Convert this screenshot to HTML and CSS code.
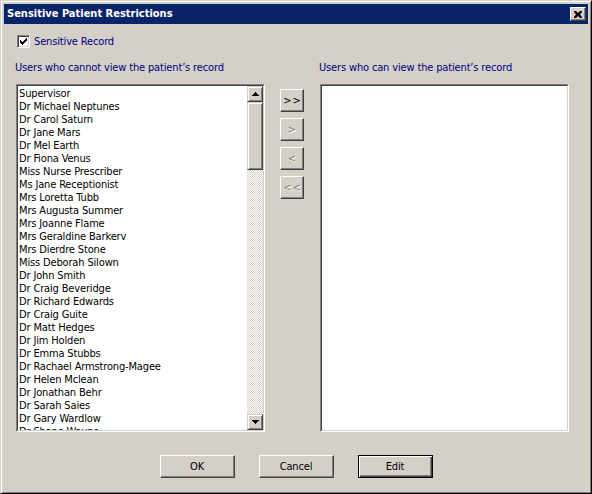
FILE: index.html
```html
<!DOCTYPE html>
<html>
<head>
<meta charset="utf-8">
<link rel="stylesheet" href="styles.css">
</head>
<body>
<div class="window">
  <div class="titlebar">
    <span class="title">Sensitive Patient Restrictions</span>
    <span class="close"><svg width="8" height="7" viewBox="0 0 8 7"><path d="M0 0h2l2 2 2-2h2v1l-2 2.5 2 2.5v1h-2l-2-2-2 2h-2v-1l2-2.5-2-2.5z" fill="#000"/></svg></span>
  </div>
  <div class="content">
    <div class="check-row">
      <span class="checkbox"><svg width="7" height="7" viewBox="0 0 7 7"><path d="M0 2h1v1h1v1h1v-1h1v-1h1v-1h1v-1h1v3h-1v1h-1v1h-1v1h-1v1h-1v-1h-1v-1h-1z" fill="#000"/></svg></span>
      <span class="check-label">Sensitive Record</span>
    </div>
    <div class="panes">
      <div class="pane">
        <div class="caption">Users who cannot view the patient’s record</div>
        <div class="listbox">
          <div class="listbox-inner">
            <div class="items">
              <div class="item">Supervisor</div>
              <div class="item">Dr Michael Neptunes</div>
              <div class="item">Dr Carol Saturn</div>
              <div class="item">Dr Jane Mars</div>
              <div class="item">Dr Mel Earth</div>
              <div class="item">Dr Fiona Venus</div>
              <div class="item">Miss Nurse Prescriber</div>
              <div class="item">Ms Jane Receptionist</div>
              <div class="item">Mrs Loretta Tubb</div>
              <div class="item">Mrs Augusta Summer</div>
              <div class="item">Mrs Joanne Flame</div>
              <div class="item">Mrs Geraldine Barkerv</div>
              <div class="item">Mrs Dierdre Stone</div>
              <div class="item">Miss Deborah Silown</div>
              <div class="item">Dr John Smith</div>
              <div class="item">Dr Craig Beveridge</div>
              <div class="item">Dr Richard Edwards</div>
              <div class="item">Dr Craig Guite</div>
              <div class="item">Dr Matt Hedges</div>
              <div class="item">Dr Jim Holden</div>
              <div class="item">Dr Emma Stubbs</div>
              <div class="item">Dr Rachael Armstrong-Magee</div>
              <div class="item">Dr Helen Mclean</div>
              <div class="item">Dr Jonathan Behr</div>
              <div class="item">Dr Sarah Saies</div>
              <div class="item">Dr Gary Wardlow</div>
              <div class="item">Dr Shane Wayne</div>
            </div>
            <div class="scrollbar">
              <span class="sb-btn"><svg width="7" height="4" viewBox="0 0 7 4"><path d="M3 0h1v1h1v1h1v1h1v1h-7v-1h1v-1h1v-1h1z" fill="#000"/></svg></span>
              <span class="sb-thumb"></span>
              <span class="sb-track"></span>
              <span class="sb-btn"><svg width="7" height="4" viewBox="0 0 7 4"><path d="M0 0h7v1h-1v1h-1v1h-1v1h-1v-1h-1v-1h-1v-1h-1z" fill="#000"/></svg></span>
            </div>
          </div>
        </div>
      </div>
      <div class="movers">
        <span class="btn mover">&gt;&gt;</span>
        <span class="btn mover disabled">&gt;</span>
        <span class="btn mover disabled">&lt;</span>
        <span class="btn mover disabled">&lt;&lt;</span>
      </div>
      <div class="pane">
        <div class="caption">Users who can view the patient’s record</div>
        <div class="listbox">
          <div class="listbox-inner"></div>
        </div>
      </div>
    </div>
    <div class="actions">
      <span class="btn action">OK</span>
      <span class="btn action">Cancel</span>
      <span class="btn action default">Edit</span>
    </div>
  </div>
</div>
</body>
</html>
```
FILE: styles.css
```css
* { box-sizing: border-box; }
html, body { margin: 0; padding: 0; }
body {
  width: 592px;
  height: 494px;
  background: #d4d0c8;
  font-family: "DejaVu Sans Condensed", "DejaVu Sans", "Liberation Sans", sans-serif;
  font-size: 11px;
  letter-spacing: -0.15px;
  color: #000;
}
.window {
  width: 592px;
  height: 494px;
  background: #d4d0c8;
  border: 1px solid;
  border-color: #d4d0c8 #000 #000 #d4d0c8;
  box-shadow: inset 1px 1px #fff, inset -1px -1px #808080;
  padding: 3px;
  display: flex;
  flex-direction: column;
}
.titlebar {
  height: 20px;
  background: #0a246a;
  display: flex;
  align-items: center;
  justify-content: space-between;
  padding: 0 2px 0 3px;
}
.title {
  color: #fff;
  font-weight: bold;
  font-size: 11px;
  letter-spacing: 0;
  line-height: 14px;
}
.close {
  width: 16px;
  height: 14px;
  background: #d4d0c8;
  border: 1px solid;
  border-color: #fff #404040 #404040 #fff;
  box-shadow: inset -1px -1px #808080;
  display: flex;
  align-items: center;
  justify-content: center;
  padding-right: 1px;
}
.content {
  flex: 1;
  display: flex;
  flex-direction: column;
  padding: 11px 0 0 12px;
}
.check-row {
  display: flex;
  align-items: center;
  height: 13px;
  margin-left: 1px;
}
.checkbox {
  width: 13px;
  height: 13px;
  background: #fff;
  border: 1px solid;
  border-color: #808080 #fff #fff #808080;
  box-shadow: inset 1px 1px #404040, inset -1px -1px #d4d0c8;
  display: flex;
  align-items: center;
  justify-content: center;
}
.check-label {
  color: #000080;
  margin-left: 4px;
  line-height: 13px;
}
.panes {
  display: flex;
  margin-top: 13px;
}
.pane {
  width: 249px;
  display: flex;
  flex-direction: column;
}
.caption {
  color: #000080;
  line-height: 14px;
  height: 14px;
  margin-left: -1px;
  margin-bottom: 9px;
  white-space: nowrap;
}
.listbox {
  height: 348px;
  border: 1px solid;
  border-color: #808080 #fff #fff #808080;
}
.listbox-inner {
  height: 100%;
  border: 1px solid;
  border-color: #404040 #d4d0c8 #d4d0c8 #404040;
  background: #fff;
  display: flex;
}
.items {
  flex: 1;
  overflow: hidden;
  padding: 1px 0 0 1px;
}
.item {
  height: 13px;
  line-height: 13px;
  white-space: nowrap;
}
.scrollbar {
  width: 16px;
  display: flex;
  flex-direction: column;
}
.sb-btn, .sb-thumb {
  background: #d4d0c8;
  border: 1px solid;
  border-color: #d4d0c8 #404040 #404040 #d4d0c8;
  box-shadow: inset 1px 1px #fff, inset -1px -1px #808080;
}
.sb-btn {
  height: 16px;
  display: flex;
  align-items: center;
  justify-content: center;
}
.sb-thumb { height: 68px; }
.sb-track {
  flex: 1;
  background: repeating-conic-gradient(#d4d0c8 0 25%, #fff 0 50%) 0 0 / 2px 2px;
}
.movers {
  display: flex;
  flex-direction: column;
  gap: 6px;
  margin: 28px 16px 0 15px;
}
.btn {
  background: #d4d0c8;
  border: 1px solid;
  border-color: #fff #404040 #404040 #fff;
  box-shadow: inset -1px -1px #808080;
  display: flex;
  align-items: center;
  justify-content: center;
  line-height: 13px;
}
.mover {
  width: 24px;
  height: 23px;
  letter-spacing: 1px;
  padding-left: 1px;
}
.disabled {
  color: #808080;
  text-shadow: 1px 1px #fff;
}
.actions {
  display: flex;
  justify-content: center;
  gap: 24px;
  margin-top: 23px;
  margin-left: -12px;
}
.action {
  width: 75px;
  height: 23px;
}
.default {
  border: 1px solid #000;
  box-shadow: inset 1px 1px #fff, inset -1px -1px #404040, inset -2px -2px #808080;
}
```
